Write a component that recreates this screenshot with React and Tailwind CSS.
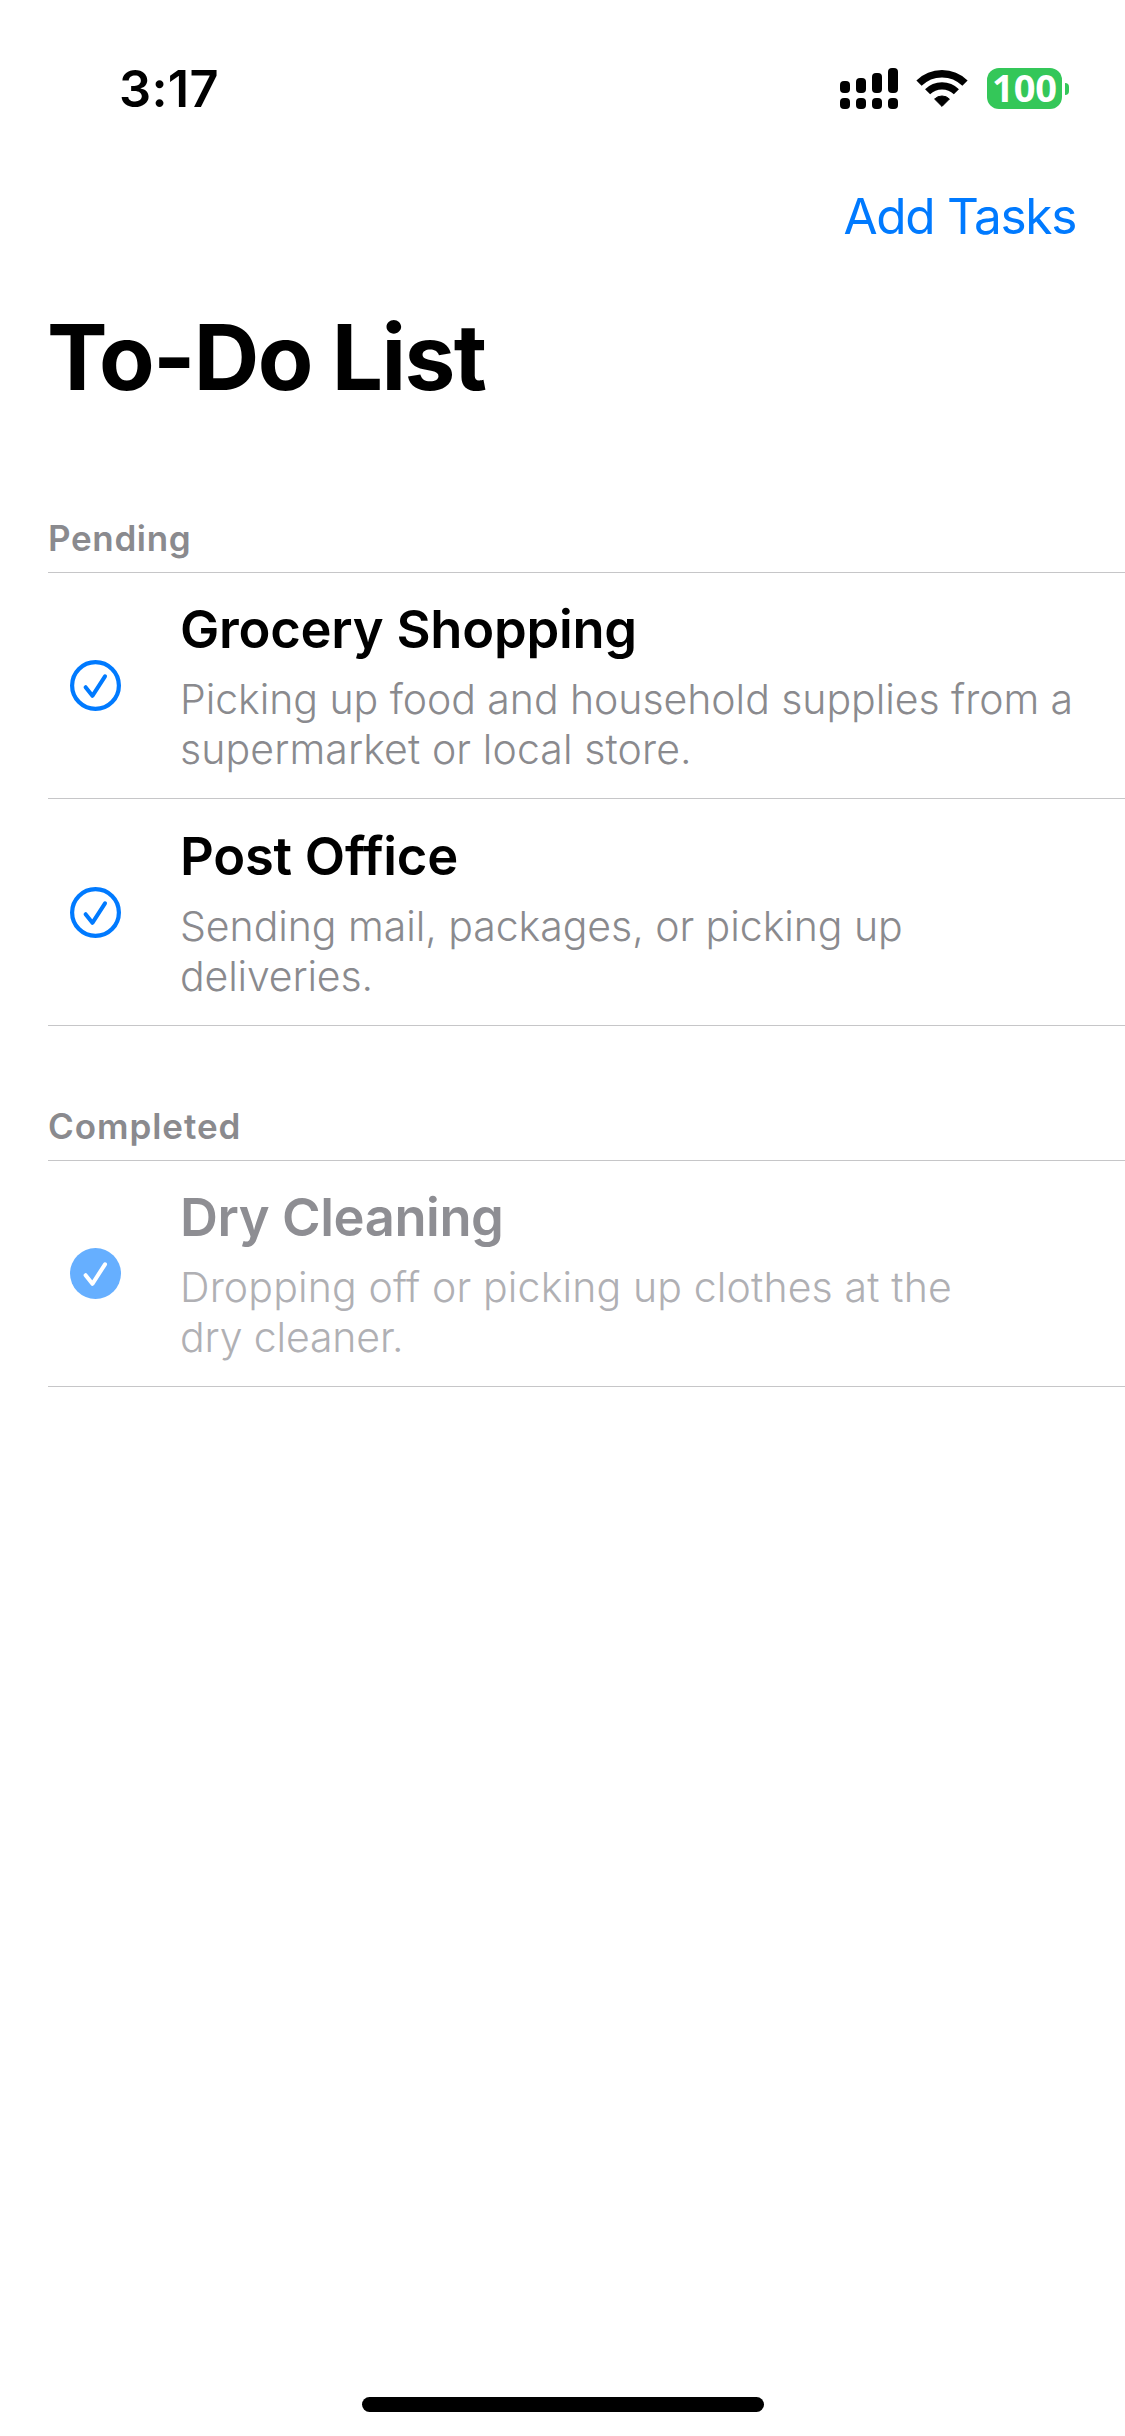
import React from "react";

const sections = [
  {
    name: "Pending",
    label: "tracking-[0.65px]",
    tasks: [
      {
        title: "Grocery Shopping",
        lines: ["Picking up food and household supplies from a", "supermarket or local store."],
        size: "h-[226px] pt-[26px]",
        spacing: ["tracking-[-0.05px]", "tracking-[0.11px]"],
      },
      {
        title: "Post Office",
        lines: ["Sending mail, packages, or picking up", "deliveries."],
        size: "h-[227px] pt-[27px]",
        spacing: ["tracking-[-0.05px]", "tracking-[-0.15px]"],
      },
    ],
  },
  {
    name: "Completed",
    label: "tracking-[0.95px]",
    tasks: [
      {
        title: "Dry Cleaning",
        lines: ["Dropping off or picking up clothes at the", "dry cleaner."],
        size: "h-[226px] pt-[26px]",
        spacing: ["tracking-[0.15px]", "tracking-[-0.15px]"],
        done: true,
      },
    ],
  },
];

function Signal() {
  return (
    <div className="grid grid-cols-4 gap-x-[6px] gap-y-[5px] items-end">
      <span className="w-[10px] h-[12px] rounded-[4px] bg-black" />
      <span className="w-[10px] h-[15px] rounded-[4px] bg-black" />
      <span className="w-[10px] h-[20px] rounded-[4px] bg-black" />
      <span className="w-[10px] h-[25px] rounded-[4px] bg-black" />
      <span className="w-[10px] h-[11px] rounded-[4px] bg-black" />
      <span className="w-[10px] h-[11px] rounded-[4px] bg-black" />
      <span className="w-[10px] h-[11px] rounded-[4px] bg-black" />
      <span className="w-[10px] h-[11px] rounded-[4px] bg-black" />
    </div>
  );
}

function Wifi() {
  return (
    <svg className="w-[52px] h-[41px]" viewBox="0 0 52 41" fill="none">
      <path d="M3 15.2A32.6 32.6 0 0 1 49 15.2" stroke="black" strokeWidth="7.4" />
      <path d="M11.6 23.8A20.4 20.4 0 0 1 40.4 23.8" stroke="black" strokeWidth="7.2" />
      <path
        d="M26 38.4L18.6 31A10.6 10.6 0 0 1 33.4 31Z"
        fill="black"
        stroke="black"
        strokeWidth="1"
        strokeLinejoin="round"
      />
    </svg>
  );
}

function Battery() {
  return (
    <div className="flex items-center gap-[3px]">
      <div className="w-[75px] h-[41px] rounded-[12px] bg-[#34c759] text-white font-['Open_Sans',sans-serif] text-[38px] leading-[39px] font-bold flex justify-center">
        100
      </div>
      <div className="w-[4px] h-[12px] rounded-r-full bg-[#34c759]" />
    </div>
  );
}

function Check({ done }) {
  return (
    <svg className="w-[51px] h-[51px] shrink-0 mt-[61px]" viewBox="0 0 51 51" fill="none">
      {done ? (
        <circle cx="25.5" cy="25.5" r="25.5" fill="#66afff" />
      ) : (
        <circle cx="25.5" cy="25.5" r="23.4" stroke="#007aff" strokeWidth="4.2" />
      )}
      <path
        d="M15.6 27.2L22.4 35.8L35 16.3"
        stroke={done ? "white" : "#007aff"}
        strokeWidth="4"
        strokeLinecap="round"
        strokeLinejoin="round"
      />
    </svg>
  );
}

function Task({ title, lines, size, spacing, done }) {
  return (
    <li className={`${size} flex items-start pl-[22px] gap-[59px] border-b border-[#c6c6c8]`}>
      <Check done={done} />
      <div className="whitespace-nowrap [font-variant-ligatures:none]">
        <h3
          className={`text-[52.5px] leading-[60px] font-semibold ${
            done ? "text-[#8e8e93] tracking-[-0.43px]" : "text-black tracking-[-0.25px]"
          }`}
        >
          {title}
        </h3>
        <p
          className={`mt-[15px] text-[41px] leading-[50px] font-light ${
            done ? "text-[#b0b0b4]" : "text-[#8a8a8e]"
          }`}
        >
          <span className={spacing[0]}>{lines[0]}</span>
          <br />
          <span className={spacing[1]}>{lines[1]}</span>
        </p>
      </div>
    </li>
  );
}

export default function App() {
  return (
    <div className="w-[1125px] h-[2436px] bg-white flex flex-col overflow-hidden font-['Inter',sans-serif]">
      <header className="h-[186px] shrink-0 flex items-start justify-between pl-[119px] pr-[56px]">
        <span className="mt-[59px] text-[50.5px] leading-[60px] font-semibold tracking-[0.3px]">3:17</span>
        <div className="mt-[68px] flex items-center">
          <Signal />
          <div className="ml-[18px] mr-[19px]">
            <Wifi />
          </div>
          <Battery />
        </div>
      </header>
      <nav className="h-[60px] shrink-0 flex justify-end pr-[49px]">
        <button className="text-[49.5px] leading-[60px] tracking-[-1.3px] text-[#007aff]">Add Tasks</button>
      </nav>
      <h1 className="mt-[61px] ml-[47px] text-[90.8px] leading-[100px] font-bold tracking-[-1.6px]">To-Do List</h1>
      <main className="mt-[111px] ml-[48px] flex flex-col gap-[80px]">
        {sections.map((s) => (
          <section key={s.name}>
            <h2
              className={`pb-[14px] border-b border-[#c6c6c8] text-[35px] leading-[40px] font-semibold text-[#8a8a8e] ${s.label}`}
            >
              {s.name}
            </h2>
            <ul>
              {s.tasks.map((t) => (
                <Task key={t.title} {...t} />
              ))}
            </ul>
          </section>
        ))}
      </main>
      <div className="mt-auto mb-[24px] ml-[362px] w-[402px] h-[15px] shrink-0 rounded-full bg-black" />
    </div>
  );
}
